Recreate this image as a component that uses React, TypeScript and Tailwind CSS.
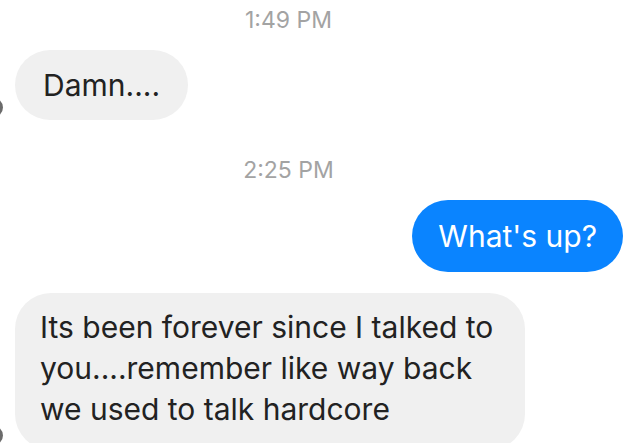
const font = { fontFamily: 'Inter, "Liberation Sans", sans-serif' };

const Stamp = ({ time }: { time: string }) => (
    <div className="h-[34px] pr-[48px] flex items-center justify-center text-[23px] text-[#a3a3a3]">{time}</div>
);

export default function App() {
    return (
        <div className="w-[625px] h-[443px] bg-white overflow-hidden relative" style={font}>
            <div className="absolute left-[-16px] top-[98px] w-[19px] h-[19px] rounded-full bg-[#6b6b6b]" />
            <div className="absolute left-[-16px] top-[426px] w-[19px] h-[19px] rounded-full bg-[#6b6b6b]" />
            <div className="flex flex-col pt-[3px]">
                <Stamp time="1:49 PM" />
                <div className="mt-[13px] ml-[15px] self-start h-[70px] px-[28px] flex items-center rounded-full bg-[#f0f0f0] text-[30px] text-[#222]">
                    Damn....
                </div>
                <div className="mt-[33px]">
                    <Stamp time="2:25 PM" />
                </div>
                <div className="mt-[13px] mr-[2px] self-end h-[72px] px-[26px] flex items-center rounded-full bg-[#0a84ff] text-[30px] text-white">
                    What's up?
                </div>
                <div className="mt-[21px] ml-[15px] w-[510px] pl-[25px] pr-[20px] pt-[14px] pb-[20px] rounded-[36px] bg-[#f0f0f0] text-[30px] leading-[41px] text-[#222]">
                    Its been forever since I talked to you....remember like way back we used to talk hardcore
                </div>
            </div>
        </div>
    );
}
